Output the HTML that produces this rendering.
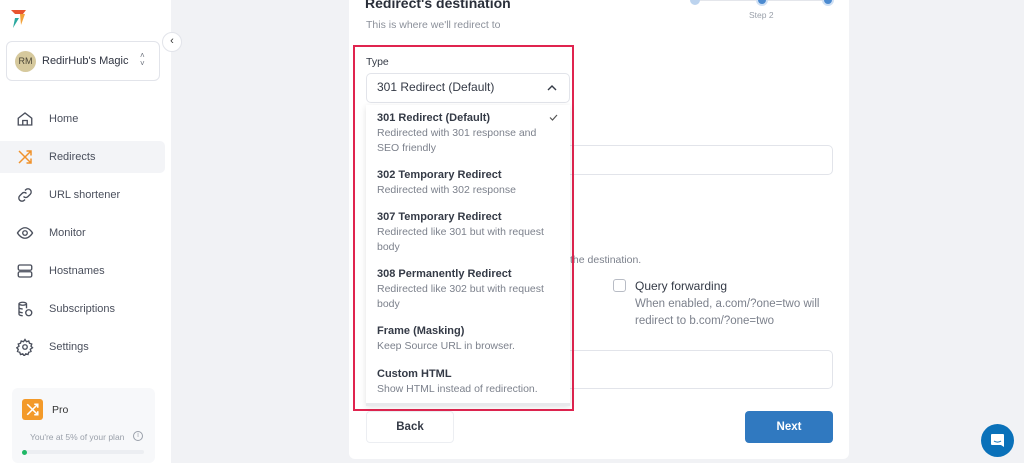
<!DOCTYPE html>
<html><head><meta charset="utf-8"><style>
*{box-sizing:border-box;margin:0;padding:0}
body{width:1024px;height:463px;overflow:hidden;background:#f1f2f5;font-family:"Liberation Sans",sans-serif;position:relative;color:#2f3441}
.abs{position:absolute}
.side{left:0;top:0;width:171px;height:463px;background:#fff}
.nav{position:absolute;left:0;width:165px;height:32px;display:flex;align-items:center;font-size:11px;color:#4a4f5c}
.nav svg{position:absolute;left:16px;width:18px;height:18px}
.nav span{position:absolute;left:49px}
.card{left:349px;top:-10px;width:500px;height:469px;background:#fff;border-radius:6px}
.opt{position:absolute;left:377px;font-size:11px}
.opt b{display:block;color:#343a46;font-weight:bold}
.opt i{display:block;font-style:normal;color:#7c818c;font-size:10.5px;line-height:15px;margin-top:2px}
</style></head><body>
<div class="abs side">
  <svg class="abs" style="left:10px;top:9px" width="18" height="20" viewBox="0 0 18 20"><path d="M1 1h15l-3 4H5z" fill="#e8542f"/><path d="M10 5h5l-4 11z" fill="#f3a23a"/><path d="M5 9l4 0-6 10z" fill="#2ba9a0"/></svg>
  <div class="abs" style="left:6px;top:41px;width:154px;height:40px;border:1px solid #e2e4ea;border-radius:6px"></div>
  <div class="abs" style="left:15px;top:51px;width:21px;height:21px;border-radius:50%;background:#d6c99d;font-size:9px;color:#4a4535;text-align:center;line-height:21px">RM</div>
  <div class="abs" style="left:42px;top:55px;font-size:11px;color:#2f3441">RedirHub's Magic</div>
  <div class="abs" style="left:140px;top:52px;font-size:8px;color:#6a6f7a;line-height:8px">˄<br>˅</div>
  <div class="abs" style="left:162px;top:32px;width:20px;height:20px;border-radius:50%;background:#fff;border:1px solid #e2e4ea;font-size:11px;text-align:center;line-height:17px;color:#333">‹</div>
  <div class="nav" style="top:103px"><svg viewBox="0 0 24 24" fill="none" stroke="#4a4f5c" stroke-width="1.8"><path d="M3 11l9-7 9 7v9H3z"/><path d="M9 20v-6h6v6"/></svg><span>Home</span></div>
  <div class="nav" style="top:141px;background:#f3f4f7;border-radius:0 5px 5px 0"><svg viewBox="0 0 24 24" fill="none" stroke="#f0922b" stroke-width="2"><path d="M4 4l16 16M14 20h6v-6M4 20L20 4M14 4h6v6"/></svg><span>Redirects</span></div>
  <div class="nav" style="top:179px"><svg viewBox="0 0 24 24" fill="none" stroke="#4a4f5c" stroke-width="1.8"><path d="M10 14a4 4 0 0 0 6 0l3-3a4 4 0 0 0-6-6l-1 1M14 10a4 4 0 0 0-6 0l-3 3a4 4 0 0 0 6 6l1-1"/></svg><span>URL shortener</span></div>
  <div class="nav" style="top:217px"><svg viewBox="0 0 24 24" fill="none" stroke="#4a4f5c" stroke-width="1.8"><path d="M2 12s4-7 10-7 10 7 10 7-4 7-10 7S2 12 2 12z"/><circle cx="12" cy="12" r="3"/></svg><span>Monitor</span></div>
  <div class="nav" style="top:255px"><svg viewBox="0 0 24 24" fill="none" stroke="#4a4f5c" stroke-width="1.8"><rect x="3" y="4" width="18" height="7" rx="2"/><rect x="3" y="13" width="18" height="7" rx="2"/></svg><span>Hostnames</span></div>
  <div class="nav" style="top:293px"><svg viewBox="0 0 24 24" fill="none" stroke="#4a4f5c" stroke-width="1.8"><ellipse cx="9" cy="5" rx="5" ry="2"/><path d="M4 5v14c0 1 2 2 5 2M14 5v6M4 10c0 1 2 2 5 2M4 15c0 1 2 2 5 2"/><circle cx="17" cy="17" r="4"/></svg><span>Subscriptions</span></div>
  <div class="nav" style="top:331px"><svg viewBox="0 0 24 24" fill="none" stroke="#4a4f5c" stroke-width="1.8"><circle cx="12" cy="12" r="3"/><path d="M12 2l2 3 3-1 1 3 3 1-1 3 2 2-3 2 1 3-3 1-1 3-3-1-2 3-2-3-3 1-1-3-3-1 1-3-2-2 3-2-1-3 3-1 1-3 3 1z"/></svg><span>Settings</span></div>
  <div class="abs" style="left:12px;top:388px;width:143px;height:75px;background:#f7f8fa;border-radius:6px"></div>
  <div class="abs" style="left:22px;top:399px;width:21px;height:21px;background:#f39a2a;border-radius:3px"><svg width="21" height="21" viewBox="0 0 24 24" fill="none" stroke="#fff" stroke-width="1.8"><path d="M6 6l12 12M14 18h4v-4M6 18L18 6M14 6h4v4"/></svg></div>
  <div class="abs" style="left:52px;top:404px;font-size:10.5px;color:#333">Pro</div>
  <div class="abs" style="left:30px;top:432px;font-size:8.5px;color:#9aa0aa">You're at 5% of your plan</div>
  <div class="abs" style="left:133px;top:431px;width:10px;height:10px;border:1px solid #9aa0aa;border-radius:50%;font-size:7px;text-align:center;line-height:8px;color:#9aa0aa">i</div>
  <div class="abs" style="left:22px;top:450px;width:122px;height:4px;background:#eceef2;border-radius:2px"></div>
  <div class="abs" style="left:22px;top:450px;width:5px;height:5px;background:#1fb866;border-radius:50%"></div>
</div>

<div class="abs card"></div>
<div class="abs" style="left:365px;top:-5px;font-size:14px;font-weight:bold;color:#2a2f3a">Redirect's destination</div>
<div class="abs" style="left:366px;top:19px;font-size:10.5px;color:#8b909a">This is where we'll redirect to</div>
<div class="abs" style="left:695px;top:0;width:134px;height:1px;background:#e4e6eb"></div>
<div class="abs" style="left:690px;top:-5px;width:10px;height:10px;border-radius:50%;background:#bcd3ee"></div>
<div class="abs" style="left:758px;top:-4px;width:8px;height:8px;border-radius:50%;background:#4b8ad0;box-shadow:0 0 0 2px #cfe0f4"></div>
<div class="abs" style="left:824px;top:-4px;width:8px;height:8px;border-radius:50%;background:#4b8ad0;box-shadow:0 0 0 2px #cfe0f4"></div>
<div class="abs" style="left:749px;top:10px;font-size:8.5px;color:#9aa0aa">Step 2</div>

<div class="abs" style="left:560px;top:145px;width:273px;height:30px;border:1px solid #e2e4ea;border-radius:5px"></div>
<div class="abs" style="left:570px;top:254px;font-size:10.5px;color:#7c818c">the destination.</div>
<div class="abs" style="left:613px;top:279px;width:13px;height:13px;border:1px solid #b8bcc5;border-radius:3px"></div>
<div class="abs" style="left:635px;top:279px;font-size:12px;color:#343a46">Query forwarding</div>
<div class="abs" style="left:635px;top:296px;font-size:11.5px;color:#7c818c;line-height:17px">When enabled, a.com/?one=two will<br>redirect to b.com/?one=two</div>
<div class="abs" style="left:560px;top:350px;width:273px;height:39px;border:1px solid #e2e4ea;border-radius:5px"></div>
<div class="abs" style="left:366px;top:411px;width:88px;height:32px;border:1px solid #eceef2;border-radius:4px;font-size:11.5px;font-weight:bold;text-align:center;line-height:31px;color:#343a46">Back</div>
<div class="abs" style="left:745px;top:411px;width:88px;height:32px;background:#3079c0;border-radius:4px;font-size:11.5px;font-weight:bold;text-align:center;line-height:32px;color:#fff">Next</div>

<div class="abs" style="left:353px;top:45px;width:221px;height:366px;border:2px solid #e0244f"></div>
<div class="abs" style="left:366px;top:56px;font-size:10.5px;color:#343a46">Type</div>
<div class="abs" style="left:366px;top:73px;width:204px;height:30px;border:1px solid #e2e4ea;border-radius:5px;background:#fff"></div>
<div class="abs" style="left:377px;top:80px;font-size:12px;color:#343a46">301 Redirect (Default)</div>
<svg class="abs" style="left:547px;top:84px" width="10" height="7" viewBox="0 0 10 7"><path d="M1 6l4-4 4 4" fill="none" stroke="#343a46" stroke-width="1.4"/></svg>
<div class="abs" style="left:366px;top:105px;width:204px;height:300px;background:#fff;box-shadow:0 2px 6px rgba(0,0,0,.12)"></div>
<div class="abs" style="left:366px;top:403px;width:204px;height:3px;background:#e8e9ec"></div>
<svg class="abs" style="left:549px;top:114px" width="9" height="7" viewBox="0 0 9 7"><path d="M1 3.5l2.5 2.5L8 1" fill="none" stroke="#555" stroke-width="1.2"/></svg>
<div class="opt" style="top:112px"><b>301 Redirect (Default)</b><i>Redirected with 301 response and<br>SEO friendly</i></div>
<div class="opt" style="top:169px"><b>302 Temporary Redirect</b><i>Redirected with 302 response</i></div>
<div class="opt" style="top:211px"><b>307 Temporary Redirect</b><i>Redirected like 301 but with request<br>body</i></div>
<div class="opt" style="top:268px"><b>308 Permanently Redirect</b><i>Redirected like 302 but with request<br>body</i></div>
<div class="opt" style="top:325px"><b>Frame (Masking)</b><i>Keep Source URL in browser.</i></div>
<div class="opt" style="top:368px"><b>Custom HTML</b><i>Show HTML instead of redirection.</i></div>

<div class="abs" style="left:981px;top:424px;width:33px;height:33px;border-radius:50%;background:#0a71b9"></div>
<svg class="abs" style="left:989px;top:432px" width="17" height="17" viewBox="0 0 17 17"><path d="M3 2h11a1 1 0 0 1 1 1v12l-3-2H3a1 1 0 0 1-1-1V3a1 1 0 0 1 1-1z" fill="#fff"/><path d="M5 9c2 1.5 5 1.5 7 0" fill="none" stroke="#0a71b9" stroke-width="1"/></svg>
</body></html>
